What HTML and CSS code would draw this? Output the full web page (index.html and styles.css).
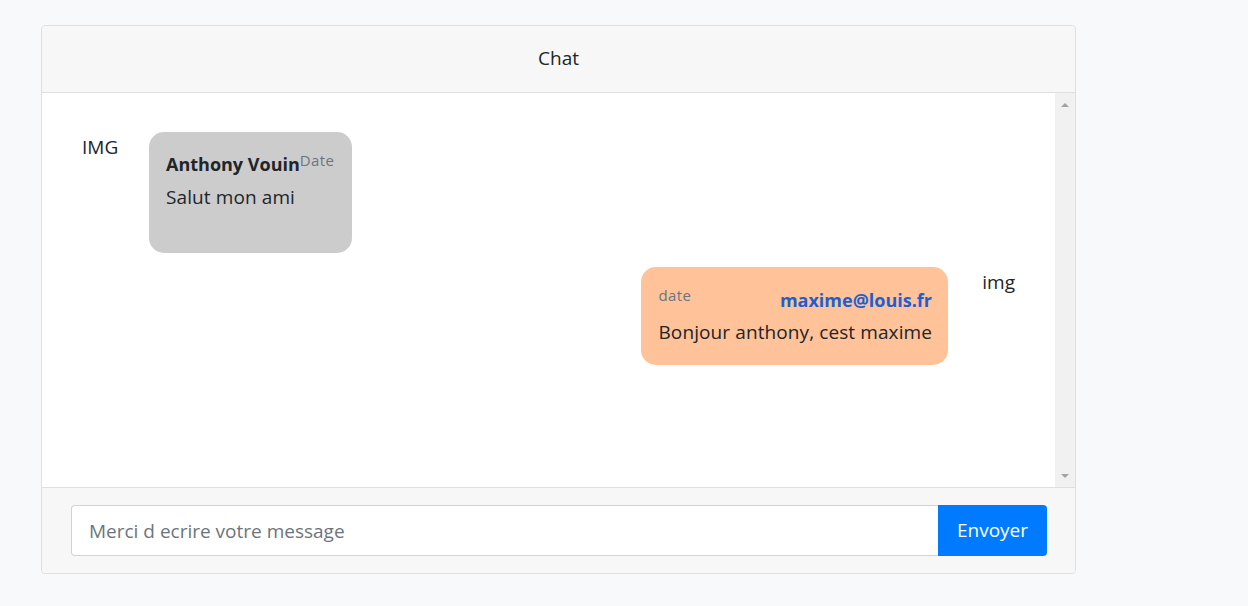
FILE: index.html
```html
<!DOCTYPE html>
<html lang="fr">
<head>
<meta charset="utf-8">
<title>Chat</title>
<link rel="stylesheet" href="styles.css">
</head>
<body>
  <div class="card">
    <div class="card-header">Chat</div>
    <div class="card-body">
      <div class="messages">
        <div class="msg-row left">
          <div class="avatar">IMG</div>
          <div class="bubble gray">
            <div class="meta">
              <span class="name">Anthony Vouin</span><span class="date">Date</span>
            </div>
            <p class="text first">Salut mon ami</p>
          </div>
        </div>
        <div class="msg-row right">
          <div class="bubble peach">
            <div class="meta spread">
              <span class="date">date</span>
              <span class="email">maxime@louis.fr</span>
            </div>
            <p class="text">Bonjour anthony, cest maxime</p>
          </div>
          <div class="avatar">img</div>
        </div>
      </div>
      <div class="scrollbar" aria-hidden="true">
        <span class="arrow up"></span>
        <span class="arrow down"></span>
      </div>
    </div>
    <div class="card-footer">
      <div class="input-group">
        <input class="form-control" type="text" placeholder="Merci d ecrire votre message">
        <button class="btn">Envoyer</button>
      </div>
    </div>
  </div>
</body>
</html>
```

FILE: styles.css
```css
* { box-sizing: border-box; }
html, body { margin: 0; padding: 0; }
body {
  background: #f8f9fa;
  font-family: "Open Sans", "Noto Sans", sans-serif;
  color: #212529;
  font-size: 18px;
  height: 606px;
  overflow: hidden;
}
.card {
  margin: 25px 0 0 41px;
  width: 1035px;
  border: 1px solid #dfdfdf;
  border-radius: 4px;
  background: #fff;
  display: flex;
  flex-direction: column;
}
.card-header {
  height: 67px;
  padding-bottom: 2px;
  background: #f7f7f7;
  border-bottom: 1px solid #dfdfdf;
  border-radius: 4px 4px 0 0;
  display: flex;
  align-items: center;
  justify-content: center;
  font-size: 19px;
}
.card-body {
  height: 394px;
  display: flex;
}
.messages {
  flex: 1;
  padding: 39px 40px 0 40px;
  display: flex;
  flex-direction: column;
  gap: 14px;
}
.scrollbar {
  width: 20px;
  background: #f1f1f1;
  display: flex;
  flex-direction: column;
  justify-content: space-between;
  align-items: center;
  padding: 10px 0 9px 0;
}
.arrow {
  width: 0;
  height: 0;
  border-left: 4px solid transparent;
  border-right: 4px solid transparent;
}
.arrow.up { border-bottom: 4px solid #a3a3a3; }
.arrow.down { border-top: 4px solid #a3a3a3; }
.msg-row {
  display: flex;
  align-items: flex-start;
}
.msg-row.right { justify-content: flex-end; }
.avatar {
  width: 67px;
  font-size: 19px;
  line-height: 30px;
}
.msg-row.left .avatar { text-align: left; }
.msg-row.right .avatar { text-align: right; }
.bubble {
  border-radius: 15px;
  padding: 19px 17px 0 17px;
}
.bubble.gray { background: #cccccc; height: 121px; padding-right: 18px; }
.bubble.peach { background: #ffc299; height: 98px; padding-right: 16px; }
.meta {
  display: flex;
  align-items: flex-start;
  height: 26px;
}
.meta.spread { justify-content: space-between; gap: 40px; }
.name {
  font-weight: 700;
  font-size: 18px;
  line-height: 26px;
}
.date {
  font-size: 15px;
  color: #6c757d;
  line-height: 18px;
  letter-spacing: 0.4px;
}
.email {
  font-weight: 700;
  font-size: 18px;
  line-height: 26px;
  color: #1d5fd1;
  padding-top: 1px;
}
.text {
  margin: 6px 0 0 0;
  font-size: 19px;
  line-height: 28px;
  letter-spacing: 0.1px;
}
.card-footer {
  height: 86px;
  background: #f7f7f7;
  border-top: 1px solid #dfdfdf;
  border-radius: 0 0 4px 4px;
  padding: 17px 28px 0 29px;
}
.input-group {
  display: flex;
  height: 51px;
}
.form-control {
  flex: 1;
  border: 1px solid #ced4da;
  border-right: none;
  border-radius: 4px 0 0 4px;
  padding: 0 17px;
  font-family: inherit;
  font-size: 19px;
  color: #495057;
  background: #fff;
  outline: none;
}
.form-control::placeholder { color: #6c757d; }
.btn {
  width: 109px;
  border: none;
  background: #007bff;
  color: #fff;
  border-radius: 0 4px 4px 0;
  font-family: inherit;
  font-size: 19px;
  padding-bottom: 2px;
}
```
